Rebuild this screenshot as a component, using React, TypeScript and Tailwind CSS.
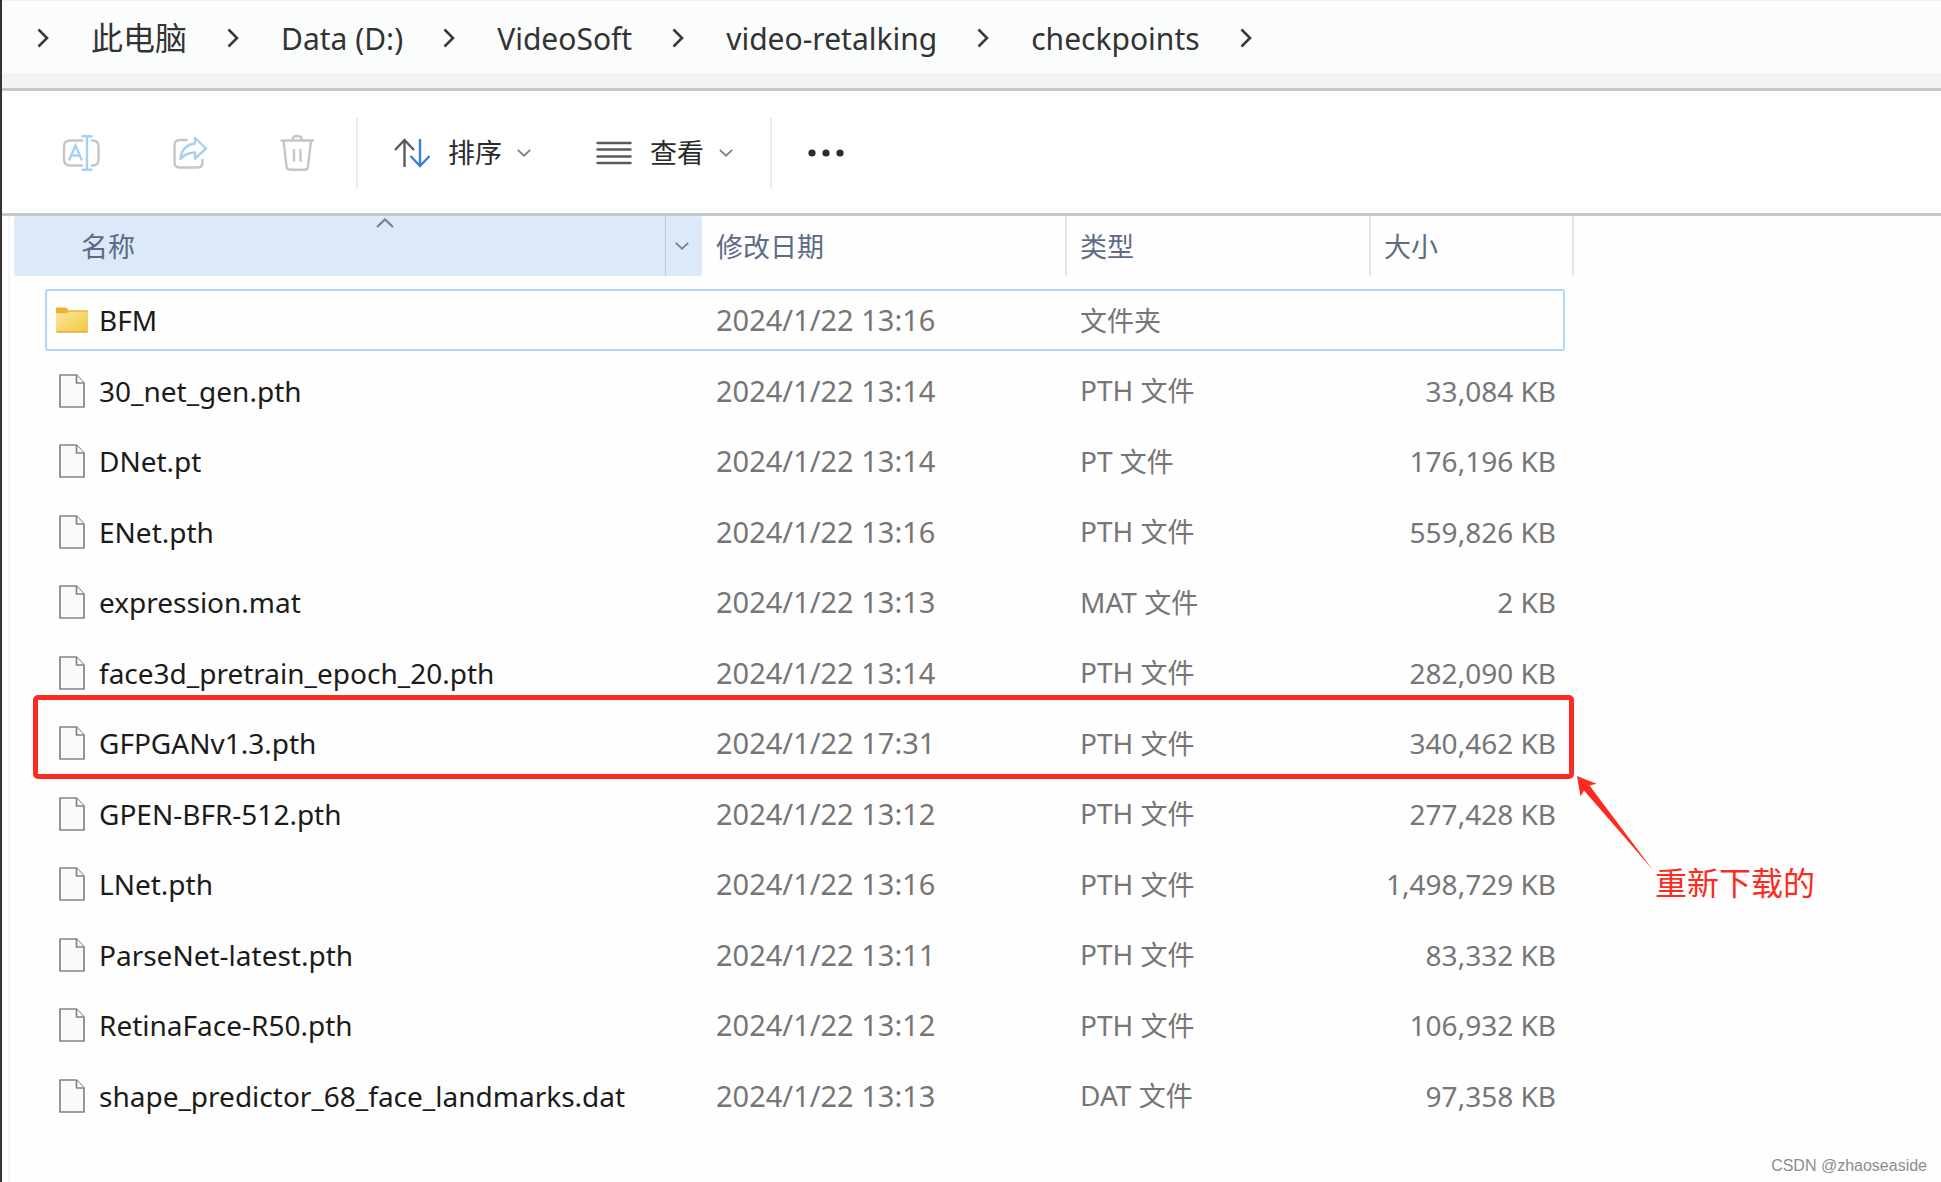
import React, { FC } from 'react'

type FileRow = {
  name: string
  date: string
  ext?: string
  kind: string
  size?: string
  folder?: boolean
}

const crumbs = ['此电脑', 'Data (D:)', 'VideoSoft', 'video-retalking', 'checkpoints']

const files: FileRow[] = [
  { name: 'BFM', date: '2024/1/22 13:16', kind: '文件夹', folder: true },
  { name: '30_net_gen.pth', date: '2024/1/22 13:14', ext: 'PTH', kind: '文件', size: '33,084 KB' },
  { name: 'DNet.pt', date: '2024/1/22 13:14', ext: 'PT', kind: '文件', size: '176,196 KB' },
  { name: 'ENet.pth', date: '2024/1/22 13:16', ext: 'PTH', kind: '文件', size: '559,826 KB' },
  { name: 'expression.mat', date: '2024/1/22 13:13', ext: 'MAT', kind: '文件', size: '2 KB' },
  { name: 'face3d_pretrain_epoch_20.pth', date: '2024/1/22 13:14', ext: 'PTH', kind: '文件', size: '282,090 KB' },
  { name: 'GFPGANv1.3.pth', date: '2024/1/22 17:31', ext: 'PTH', kind: '文件', size: '340,462 KB' },
  { name: 'GPEN-BFR-512.pth', date: '2024/1/22 13:12', ext: 'PTH', kind: '文件', size: '277,428 KB' },
  { name: 'LNet.pth', date: '2024/1/22 13:16', ext: 'PTH', kind: '文件', size: '1,498,729 KB' },
  { name: 'ParseNet-latest.pth', date: '2024/1/22 13:11', ext: 'PTH', kind: '文件', size: '83,332 KB' },
  { name: 'RetinaFace-R50.pth', date: '2024/1/22 13:12', ext: 'PTH', kind: '文件', size: '106,932 KB' },
  { name: 'shape_predictor_68_face_landmarks.dat', date: '2024/1/22 13:13', ext: 'DAT', kind: '文件', size: '97,358 KB' },
]

const CrumbArrow = () => (
  <svg className="w-3 h-5 shrink-0" viewBox="0 0 12 20" fill="none" stroke="#3a3a3a" strokeWidth="2.6" aria-hidden="true">
    <path d="M1.5 1.5 10 10 1.5 18.5" />
  </svg>
)

const SmallArrow: FC<{ up?: boolean; wide?: boolean }> = ({ up, wide }) => (
  <svg className={wide ? 'w-[18px] h-[10px]' : 'w-[14px] h-2'} viewBox="0 0 18 10" fill="none" stroke="#7c8084" strokeWidth="2.2" aria-hidden="true">
    <path d={up ? 'M1 9 9 1.5 17 9' : 'M1 1 9 8.5 17 1'} />
  </svg>
)

const RenameIcon = () => (
  <svg className="size-[38px]" viewBox="0 0 38 38" fill="none" strokeWidth="2.4" aria-hidden="true">
    <path stroke="#c6c6c6" d="M21 6.5H8.5Q2 6.5 2 12.5V25.5Q2 31.5 8.5 31.5H21M29 6.5H30.5Q36.5 6.5 36.5 12.5V25.5Q36.5 31.5 30.5 31.5H29" />
    <path stroke="#a9cff3" d="M7 26.5 13.5 11.5 20 26.5M9.5 21.5H17.5M25 2.2V35.8M19.5 2.2H30.5M19.5 35.8H30.5" />
  </svg>
)

const ShareIcon = () => (
  <svg className="size-[38px]" viewBox="0 0 38 38" fill="none" strokeWidth="2.4" strokeLinejoin="round" aria-hidden="true">
    <path stroke="#c6c6c6" d="M17.5 6H9.5Q4.5 6 4.5 11V28.5Q4.5 33.5 9.5 33.5H27.5Q32.5 33.5 32.5 28.5V25" />
    <path stroke="#a9cff3" d="M25 4 36 14.5 25 24.5V18.5Q16 18.5 10.5 25Q11.5 11.5 25 9.5Z" />
  </svg>
)

const DeleteIcon = () => (
  <svg className="size-[38px]" viewBox="0 0 38 38" fill="none" stroke="#c6c6c6" strokeWidth="2.4" strokeLinejoin="round" aria-hidden="true">
    <path d="M2.5 6.5H36M14.5 6.5Q14.5 2 19.3 2T24 6.5M5.5 6.5 8.5 32.5Q9 35.8 12 35.8H26.5Q29.5 35.8 30 32.5L33 6.5" />
    <path d="M16 15V27.5M22.5 15V27.5" />
  </svg>
)

const SortIcon = () => (
  <svg className="w-9 h-[30px]" viewBox="0 0 36 30" fill="none" strokeWidth="2.4" aria-hidden="true">
    <path stroke="#5b5b5b" d="M10.5 29V2M1 12 10.5 2 20 12" />
    <path stroke="#3f7fdc" d="M26 1V28M16.5 18 26 28 35.5 18" />
  </svg>
)

const ViewIcon = () => (
  <svg className="w-9 h-[26px]" viewBox="0 0 36 26" stroke="#5b5b5b" strokeWidth="2.4" strokeLinecap="round" aria-hidden="true">
    <path d="M1.5 3H34.5M1.5 9.5H34.5M1.5 16.5H34.5M1.5 23H34.5" />
  </svg>
)

const FolderIcon = () => (
  <svg className="w-[33px] h-[26px]" viewBox="0 0 33 26" aria-hidden="true">
    <defs>
      <linearGradient id="folder" x1="0" y1="0" x2="1" y2="1">
        <stop offset="0" stopColor="#fbe7a0" />
        <stop offset="1" stopColor="#f2c63e" />
      </linearGradient>
    </defs>
    <path fill="#ebb42f" d="M0 1.5Q0 0 1.5 0H10Q11 0 11.7 1.3L12.7 3H31.5Q33 3 33 4.5V8H0Z" />
    <path fill="url(#folder)" d="M0 6H10.5Q12 6 13 4.5H33V24.5Q33 26 31.5 26H1.5Q0 26 0 24.5Z" />
    <path stroke="#dda936" strokeWidth="1.3" d="M.5 25.3H32.5" />
  </svg>
)

const FileIcon = () => (
  <svg className="w-[26px] h-[34px]" viewBox="0 0 26 34" fill="#fafafa" stroke="#848482" strokeWidth="1.7" strokeLinejoin="round" aria-hidden="true">
    <path d="M1 1H17.5L25 9V33H1Z" />
    <path d="M17.5 1V9H25" />
  </svg>
)

const Divider = () => <div className="w-[2px] h-[71px] bg-[#ececec]" />

const App: FC = () => {
  return (
    <div className="relative min-h-screen flex flex-col overflow-hidden border-l-2 border-[#333333] bg-[#fefefe] font-['Noto_Sans','Noto_Sans_CJK_SC',sans-serif]">
      {/* Address bar */}
      <nav className="h-[73px] pl-[35px] pt-[2px] flex items-center bg-[#fbfdfc] border-t border-[#f0f2f2]">
        <CrumbArrow />
        {crumbs.map((c) => (
          <React.Fragment key={c}>
            <a href="#" className={`ml-[42px] mr-[40px] whitespace-nowrap text-[#333333] ${c === '此电脑' ? 'text-[32px]' : 'text-[30px]'}`}>
              {c}
            </a>
            <CrumbArrow />
          </React.Fragment>
        ))}
      </nav>
      <div className="h-[18px] bg-[#f2f4f4] border-b-[3px] border-[#c3c9c9]" />

      {/* Toolbar */}
      <div className="h-[125px] pl-[60px] pt-[2px] flex items-center border-b-[3px] border-[#c3c9c9] bg-white text-[27px] text-[#2b2b2b]">
        <button aria-label="Rename"><RenameIcon /></button>
        <button aria-label="Share" className="ml-[70px]"><ShareIcon /></button>
        <button aria-label="Delete" className="ml-[70px] mr-[40px]"><DeleteIcon /></button>
        <Divider />
        <button className="ml-[36px] mr-[65px] flex items-center">
          <SortIcon />
          <span className="ml-[18px] mr-[15px]">排序</span>
          <SmallArrow />
        </button>
        <button className="mr-[37px] flex items-center">
          <ViewIcon />
          <span className="ml-[18px] mr-[15px]">查看</span>
          <SmallArrow />
        </button>
        <Divider />
        <button aria-label="More" className="ml-[36px]">
          <svg className="w-9 h-2" viewBox="0 0 36 8" fill="#2b2b2b">
            <circle cx="4" cy="4" r="3.6" />
            <circle cx="18" cy="4" r="3.6" />
            <circle cx="32" cy="4" r="3.6" />
          </svg>
        </button>
      </div>

      {/* File list */}
      <main className="relative flex-1 ml-[6px] pl-1 border-l-2 border-[#f5f5f5]">
        <table className="w-full table-fixed border-collapse text-left text-[28px] text-[#767676]">
          <colgroup>
            <col className="w-[31px]" />
            <col className="w-[657px]" />
            <col className="w-[365px]" />
            <col className="w-[304px]" />
            <col className="w-[194px]" />
            <col className="w-[9px]" />
            <col />
          </colgroup>
          <thead className="text-[27px] text-[#5f6b85]">
            <tr>
              <th colSpan={2} className="p-0 pb-[9px] font-normal">
                <div className="relative h-[60px] flex rounded-[3px] bg-[#dbe9f8]">
                  <button className="flex-1 pl-[67px] pt-[2px] text-left border-r border-[#bccbdc]">名称</button>
                  <button aria-label="Filter" className="w-9 pr-1 flex items-center justify-center"><SmallArrow /></button>
                  <span className="absolute left-[362px] top-[2px] flex"><SmallArrow up wide /></span>
                </div>
              </th>
              <th className="p-0 pb-[9px] font-normal">
                <button className="block w-full h-[60px] pl-[14px] pt-[2px] text-left border-r-2 border-[#e6e6e6]">修改日期</button>
              </th>
              <th className="p-0 pb-[9px] font-normal">
                <button className="block w-full h-[60px] pl-[13px] pt-[2px] text-left border-r-2 border-[#e6e6e6]">类型</button>
              </th>
              <th colSpan={2} className="p-0 pb-[9px] font-normal">
                <button className="block w-full h-[60px] pl-[13px] pt-[2px] text-left border-r-2 border-[#e6e6e6]">大小</button>
              </th>
              <th className="p-0" />
            </tr>
          </thead>
          <tbody>
            {files.map((f) => {
              const edge = f.folder ? 'border-[#b0d6fd]' : 'border-transparent'
              return (
                <tr key={f.name} className="group whitespace-nowrap">
                  <td className="p-0" />
                  <td className="px-0 py-1">
                    <div className={`h-[62px] group-even:h-[63px] pl-[9px] flex items-center border-2 border-r-0 rounded-l-[3px] text-[#1b1b1b] ${edge}`}>
                      <span className="w-8 mr-[11px] flex justify-center">{f.folder ? <FolderIcon /> : <FileIcon />}</span>
                      {f.name}
                    </div>
                  </td>
                  <td className="px-0 py-1">
                    <div className={`h-[62px] group-even:h-[63px] pl-[14px] flex items-center border-y-2 text-[29px] ${edge}`}>{f.date}</div>
                  </td>
                  <td className="px-0 py-1">
                    <div className={`h-[62px] group-even:h-[63px] pl-[13px] flex items-center border-y-2 ${edge}`}>
                      <span>
                        {f.ext && `${f.ext} `}
                        <span className="text-[27px]">{f.kind}</span>
                      </span>
                    </div>
                  </td>
                  <td className="px-0 py-1">
                    <div className={`h-[62px] group-even:h-[63px] pr-[7px] flex items-center justify-end border-2 border-l-0 rounded-r-[3px] ${edge}`}>{f.size}</div>
                  </td>
                  <td className="p-0" />
                  <td className="p-0" />
                </tr>
              )
            })}
          </tbody>
        </table>

        {/* Highlight with its arrow and note */}
        <div className="absolute left-[23px] top-[479px] w-[1541px] h-[84px] border-5 border-[#fb2b20] rounded-[5px] pointer-events-none" />
        <svg className="absolute left-[1567px] top-[560px] w-[77px] h-[95px]" viewBox="0 0 77 95" fill="#fb2b20" aria-hidden="true">
          <path d="M0 0 19.5 7.7 12.5 9.5 76 94 7 14.5 3.5 20.5Z" />
        </svg>
        <p className="absolute left-[1645px] top-[643px] text-[32px] leading-[48px] whitespace-nowrap text-[#fb2b20]">重新下载的</p>
      </main>

      <span className="absolute right-[14px] bottom-[6px] font-['Liberation_Sans',sans-serif] text-base leading-5 text-[#8c8c8c]">CSDN @zhaoseaside</span>
    </div>
  )
}

export default App
